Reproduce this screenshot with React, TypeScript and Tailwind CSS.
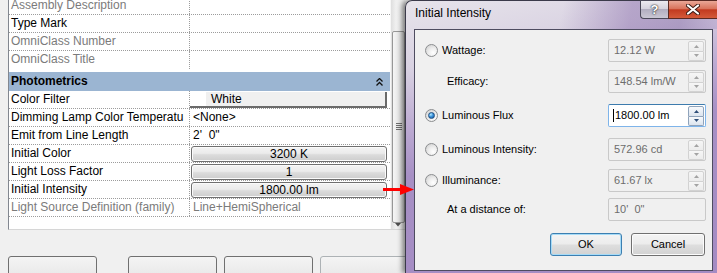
import React from "react"

type Prop = {
  label: string
  value?: string
  kind?: "text" | "button" | "color"
  dim?: boolean
  noLine?: boolean
}

const identity: Prop[] = [
  { label: "Assembly Description", dim: true },
  { label: "Type Mark" },
  { label: "OmniClass Number", dim: true },
  { label: "OmniClass Title", dim: true, noLine: true },
]

const photometrics: Prop[] = [
  { label: "Color Filter", value: "White", kind: "color" },
  { label: "Dimming Lamp Color Temperatu", value: "<None>" },
  { label: "Emit from Line Length", value: `2'  0"` },
  { label: "Initial Color", value: "3200 K", kind: "button" },
  { label: "Light Loss Factor", value: "1", kind: "button" },
  { label: "Initial Intensity", value: "1800.00 lm", kind: "button" },
  { label: "Light Source Definition (family)", value: "Line+HemiSpherical", dim: true },
]

const Row = ({ r }: { r: Prop }) => {
  const tone = r.dim ? "text-[#7b7b7b]" : "text-black"
  return (
    <div className={`flex h-[18px] shrink-0 ${r.noLine ? "" : "border-b border-dotted border-[#9c9c9c]"}`}>
      <div className={`w-[181px] shrink-0 overflow-hidden whitespace-nowrap border-r border-dotted border-[#9c9c9c] pl-[2px] leading-[17px] ${tone}`}>
        {r.label}
      </div>
      <div className={`flex-1 overflow-hidden whitespace-pre ${tone}`}>
        {r.kind === "button" && (
          <div className="ml-[1px] mt-[1px] flex h-[16px] w-[196px] items-center justify-center rounded-[3px] border border-[#6f6f6f] bg-[linear-gradient(#f4f4f4_0%,#ebebeb_45%,#dcdcdc_55%,#cdcdcd_100%)] leading-[14px] shadow-[inset_0_0_0_1px_#fbfbfb]">
            {r.value}
          </div>
        )}
        {r.kind === "color" && (
          <div className="mt-[1px] flex h-[16px] w-[197px] border-b-2 border-r-2 border-[#6a6a6a] bg-[#f0f0f0] leading-[14px]">
            <span className="w-[16px] bg-white" />
            <span className="pl-[5px]">{r.value}</span>
          </div>
        )}
        {(r.kind === undefined || r.kind === "text") && r.value && (
          <div className="pl-[3px] leading-[17px]">{r.value}</div>
        )}
      </div>
    </div>
  )
}

const Scrollbar = () => (
  <div className="flex flex-1 flex-col border-l border-[#f7f7f7] bg-[linear-gradient(90deg,#dedede,#f0f0f0_35%,#e8e8e8)]">
    <div className="h-[31px]" />
    <div className="ml-[1px] flex h-[192px] w-[13px] flex-col items-center justify-center gap-[1px] rounded-[2px] border border-[#979797] bg-[linear-gradient(90deg,#f6f6f6,#e7e7e7_50%,#d3d3d3)] pb-[2px]">
      <span className="h-px w-[6px] bg-[#6e6e6e]" />
      <span className="h-px w-[6px] bg-[#6e6e6e]" />
      <span className="h-px w-[6px] bg-[#6e6e6e]" />
      <span className="h-px w-[6px] bg-[#6e6e6e]" />
    </div>
    <div className="flex flex-1 items-center justify-center pb-[2px]">
      <svg width="6" height="4" viewBox="0 0 6 4">
        <polygon points="0,0 6,0 3,3.5" fill="#4e4e4e" />
      </svg>
    </div>
  </div>
)

const PropertyPanel = () => (
  <div className="flex w-[405px] shrink-0 flex-col pl-[8px] text-[12px]">
    <div className="flex h-[242px] border-b border-l border-b-[#d6d6d6] border-l-[#828790] bg-white">
      <div className="flex w-[381px] shrink-0 flex-col overflow-hidden">
        <div className="-mt-[3px] flex flex-col">
          {identity.map((r) => (
            <Row key={r.label} r={r} />
          ))}
        </div>
        <div className="h-[3px] shrink-0" />
        <div className="flex h-[19px] shrink-0 items-center justify-between bg-[#9bb5d2] pl-[2px] pr-[7px] font-bold leading-[17px]">
          <span>Photometrics</span>
          <svg width="7" height="8" viewBox="0 0 7 8">
            <path d="M0.5 3.5 L3.5 0.5 L6.5 3.5 M0.5 7.5 L3.5 4.5 L6.5 7.5" fill="none" stroke="#111" strokeWidth="1.3" />
          </svg>
        </div>
        {photometrics.map((r) => (
          <Row key={r.label} r={r} />
        ))}
      </div>
      <Scrollbar />
    </div>
    <div className="mt-[26px] flex">
      {[
        "ml-0 w-[89px] border-[#707070]",
        "ml-[31px] w-[89px] border-[#707070]",
        "ml-[7px] w-[89px] border-[#707070]",
        "ml-[7px] w-[100px] border-[#adb2b5]",
      ].map((c, i) => (
        <div key={i} className={`h-[20px] shrink-0 rounded-[3px] border bg-[linear-gradient(#f4f4f4,#e9e9e9)] ${c}`} />
      ))}
    </div>
  </div>
)

const Radio = ({ on }: { on?: boolean }) => (
  <span className="flex h-[13px] w-[13px] shrink-0 items-center justify-center rounded-full border border-[#8b8d8f] bg-[radial-gradient(circle_at_65%_70%,#ffffff_0%,#ececec_45%,#c9c9c9_100%)]">
    {on && (
      <span className="h-[7px] w-[7px] rounded-full border border-[#1f4f82] bg-[radial-gradient(circle_at_35%_30%,#b6ecff_0%,#3d95de_45%,#0f4c8d_100%)]" />
    )}
  </span>
)

const Arrowhead = ({ up, active }: { up?: boolean; active?: boolean }) => (
  <svg width="5" height="3" viewBox="0 0 5 3">
    <polygon points={up ? "0,3 5,3 2.5,0" : "0,0 5,0 2.5,3"} fill={active ? "#2d4d78" : "#a3a3a3"} />
  </svg>
)

const Spinner = ({ active }: { active?: boolean }) => {
  const b = active
    ? "border-[#8fa3bb] bg-[linear-gradient(#f7f9fc,#dce4ee)]"
    : "border-[#d2d2d2] bg-[linear-gradient(#f6f6f6,#ececec)]"
  return (
    <div className="ml-auto mr-[1px] flex h-full w-[16px] shrink-0 flex-col pt-[1px]">
      <div className={`flex flex-1 items-center justify-center rounded-t-[2px] border ${b}`}>
        <Arrowhead up active={active} />
      </div>
      <div className={`flex flex-1 items-center justify-center rounded-b-[2px] border border-t-0 ${b}`}>
        <Arrowhead active={active} />
      </div>
    </div>
  )
}

type Field = {
  label: string
  value: string
  radio?: boolean
  on?: boolean
  spin?: boolean
  mt: string
}

const fields: Field[] = [
  { label: "Wattage:", value: "12.12 W", radio: true, spin: true, mt: "mt-0" },
  { label: "Efficacy:", value: "148.54 lm/W", spin: true, mt: "mt-[8px]" },
  { label: "Luminous Flux", value: "1800.00 lm", radio: true, on: true, spin: true, mt: "mt-[11px]" },
  { label: "Luminous Intensity:", value: "572.96 cd", radio: true, spin: true, mt: "mt-[11px]" },
  { label: "Illuminance:", value: "61.67 lx", radio: true, spin: true, mt: "mt-[8px]" },
  { label: "At a distance of:", value: `10'  0"`, mt: "mt-[6px]" },
]

const FieldRow = ({ f }: { f: Field }) => (
  <div className={`flex h-[23px] items-center ${f.mt}`}>
    <div className="flex w-[183px] shrink-0 items-center gap-[4px]">
      {f.radio ? <Radio on={f.on} /> : <span className="w-[18px]" />}
      <span>{f.label}</span>
    </div>
    {f.on ? (
      <div className="flex h-[23px] w-[98px] items-center rounded-[2px] border border-[#7eb4ea] border-t-[#3d7bad] bg-white pl-[4px]">
        <span className="h-[13px] w-px bg-black" />
        <span className="ml-px text-black">{f.value}</span>
        <Spinner active />
      </div>
    ) : (
      <div className="flex h-[23px] w-[98px] items-center whitespace-pre rounded-[2px] border border-[#c9c9c9] bg-[#f0f0f0] pl-[5px] text-[#6d6d6d]">
        <span>{f.value}</span>
        {f.spin && <Spinner />}
      </div>
    )}
  </div>
)

const Dialog = () => (
  <div className="relative h-[273px] w-[312px] shrink-0 rounded-tl-[7px] border-l border-t border-[#3b3a4a] bg-[linear-gradient(168deg,#e7e4eb_0%,#d9d2e2_20%,#bcaad2_38%,#a790c5_52%,#a48bc3_100%)] shadow-[-3px_0_5px_rgba(0,0,0,0.45)]">
    <div className="flex h-[28px] items-start bg-[linear-gradient(100deg,transparent_50%,rgba(150,125,180,0.55)_72%,rgba(125,100,160,0.45)_88%,rgba(160,140,190,0.3)_100%)]">
      <span className="pl-[9px] pt-[5px] text-[12px] leading-[15px] text-black">Initial Intensity</span>
      <div className="-mt-px ml-auto flex h-[19px]">
        <div className="flex w-[28px] items-center justify-center rounded-bl-[4px] border border-r-0 border-[#4a4858] bg-[linear-gradient(#eceaf0_0%,#d6d3de_45%,#b2aec0_50%,#cac7d4_100%)] text-[13px] font-bold leading-none text-white [text-shadow:0_0_2px_#222,0_0_1px_#222]">
          ?
        </div>
        <div className="flex w-[49px] items-center justify-center border border-r-0 border-[#5a2a24] bg-[linear-gradient(#eaa797_0%,#d9735c_45%,#c23a20_52%,#d45a3a_100%)]">
          <svg width="14" height="11" viewBox="0 0 14 11">
            <path d="M2 1.5 L12 9.5 M12 1.5 L2 9.5" stroke="#3a1a14" strokeWidth="4" strokeLinecap="round" />
            <path d="M2 1.5 L12 9.5 M12 1.5 L2 9.5" stroke="#fff" strokeWidth="2.2" strokeLinecap="round" />
          </svg>
        </div>
      </div>
    </div>
    <div className="ml-[8px] flex h-[242px] w-[299px] flex-col border border-[#4e4c60] bg-[#f0f0f0] pl-[10px] pr-[6px] pt-[9px] text-[11px] text-black">
      {fields.map((f) => (
        <FieldRow key={f.label} f={f} />
      ))}
      <div className="mr-px mt-[12px] flex justify-end gap-[9px]">
        <button className="h-[23px] w-[72px] rounded-[3px] border border-[#3c7fb1] bg-[linear-gradient(#f4f4f4_0%,#ececec_48%,#dedede_52%,#d2d2d2_100%)] shadow-[inset_0_0_0_1px_#a6dbf7]">
          OK
        </button>
        <button className="h-[23px] w-[74px] rounded-[3px] border border-[#707070] bg-[linear-gradient(#f4f4f4_0%,#ececec_48%,#dedede_52%,#d2d2d2_100%)] shadow-[inset_0_0_0_1px_#fcfcfc]">
          Cancel
        </button>
      </div>
    </div>
  </div>
)

export default function App() {
  return (
    <div className="relative flex h-[273px] w-[717px] overflow-hidden bg-[#f0f0f0] font-['Liberation_Sans',Arial,sans-serif] text-black">
      <PropertyPanel />
      <Dialog />
      {/* red pointer drawn over the screenshot */}
      <svg className="absolute left-[383px] top-[184px]" width="31" height="11" viewBox="0 0 31 11">
        <rect x="0" y="4" width="19" height="3" fill="#ff0000" />
        <polygon points="17,0 31,5.5 17,11" fill="#ff0000" />
      </svg>
    </div>
  )
}
